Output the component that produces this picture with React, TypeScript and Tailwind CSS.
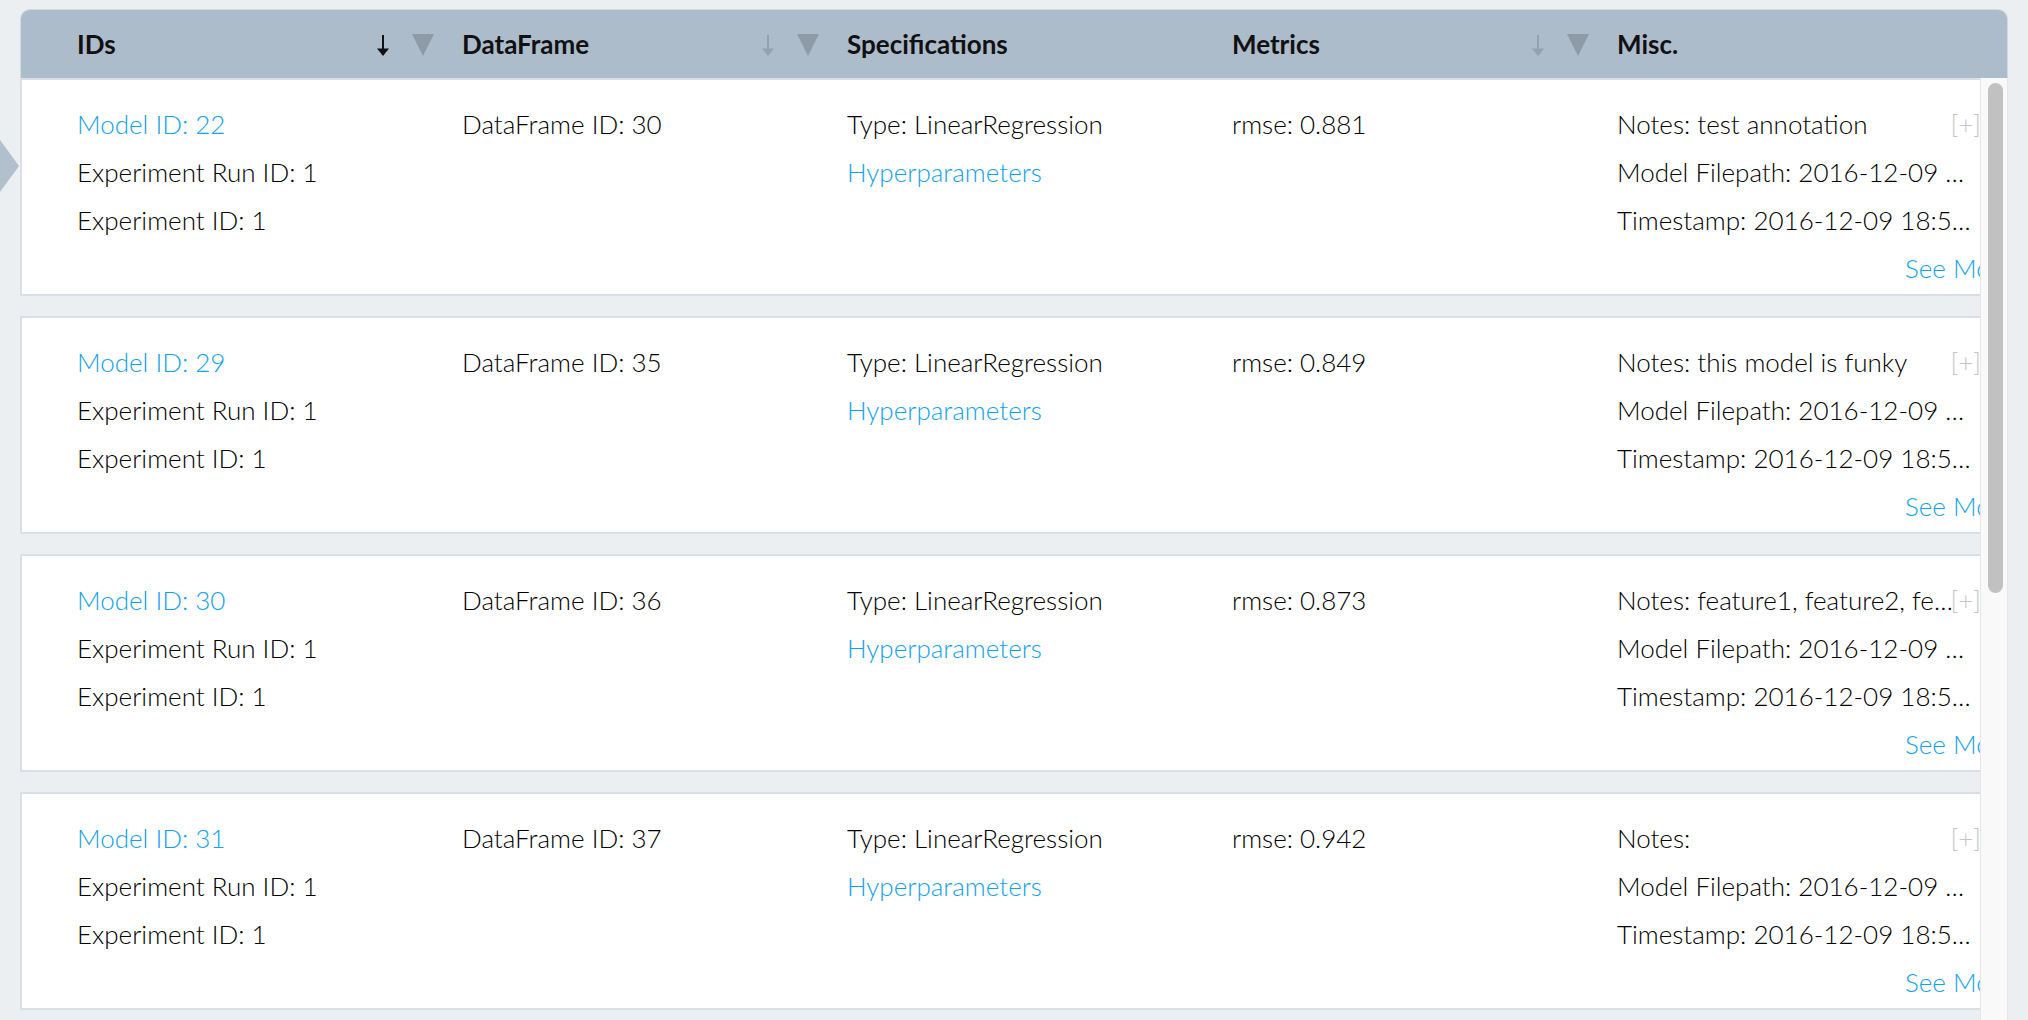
import React from 'react';

type Row = { id: number; df: number; rmse: string; notes: string };

const rows: Row[] = [
  { id: 22, df: 30, rmse: '0.881', notes: 'test annotation' },
  { id: 29, df: 35, rmse: '0.849', notes: 'this model is funky' },
  { id: 30, df: 36, rmse: '0.873', notes: 'feature1, feature2, feature3, feature4' },
  { id: 31, df: 37, rmse: '0.942', notes: '' },
  { id: 32, df: 38, rmse: '0.917', notes: '' },
];

function SortIcons({ active }: { active?: boolean }) {
  const c = active ? '#111111' : '#95a1ad';
  return (
    <div className="ml-auto flex items-center gap-[23px] pr-[28px] pt-[2px]">
      <svg width="12" height="21" viewBox="0 0 12 21">
        <rect x="5" y="0" width="2" height="15" fill={c} />
        <path d="M0 13.5 L12 13.5 L6 21 Z" fill={c} />
      </svg>
      <svg width="22" height="22" viewBox="0 0 22 22">
        <path d="M0 0 H22 L11 22 Z" fill="#8e9aa6" />
      </svg>
    </div>
  );
}

function HeaderCell({ label, sort, active }: { label: string; sort?: boolean; active?: boolean }) {
  return (
    <div className="flex h-full w-[385px] shrink-0 items-center">
      <span className="font-bold">{label}</span>
      {sort && <SortIcons active={active} />}
    </div>
  );
}

function Card({ r }: { r: Row }) {
  return (
    <div className="mb-[20px] flex overflow-hidden border-2 border-r-0 border-[#d8dfe6] bg-white pb-[2px] pl-[55px] pt-[20px] font-light text-black">
      <div className="w-[385px] shrink-0">
        <div className="text-[#0fa2f0]">Model ID: {r.id}</div>
        <div>Experiment Run ID: 1</div>
        <div>Experiment ID: 1</div>
      </div>
      <div className="w-[385px] shrink-0">
        <div>DataFrame ID: {r.df}</div>
      </div>
      <div className="w-[385px] shrink-0">
        <div>Type: LinearRegression</div>
        <div className="text-[#0fa2f0]">Hyperparameters</div>
      </div>
      <div className="w-[385px] shrink-0">
        <div>rmse: {r.rmse}</div>
      </div>
      <div className="w-[400px] shrink-0">
        <div className="flex w-[364px]">
          <span className="min-w-0 flex-1 truncate">Notes: {r.notes}</span>
          <span className="-ml-[6px] shrink-0 text-[#c4c4c4]">[+]</span>
        </div>
        <div className="w-[348px] truncate">Model Filepath: 2016-12-09 18:53:07_model_{r.id}.pkl</div>
        <div className="w-[357px] truncate">Timestamp: 2016-12-09 18:53:07</div>
        <div className="whitespace-nowrap pl-[288px] text-[#0fa2f0]">See More</div>
      </div>
    </div>
  );
}

export default function App() {
  return (
    <div className="relative flex h-screen w-full flex-col overflow-hidden bg-[#ebeff1] px-[20px] pt-[9px] font-[Lato,sans-serif] text-[26px] leading-[48px] text-[#111111]">
      {/* selected row marker */}
      <svg className="absolute left-0 top-[140px]" width="20" height="52" viewBox="0 0 20 52">
        <path d="M0 0 L19 26 L0 52 Z" fill="#b2c0cd" />
      </svg>

      <div className="flex h-[69px] shrink-0 rounded-t-[10px] border border-b-0 border-[#d3dbe2] bg-[#adbccb] pl-[56px]">
        <HeaderCell label="IDs" sort active />
        <HeaderCell label="DataFrame" sort />
        <HeaderCell label="Specifications" />
        <HeaderCell label="Metrics" sort />
        <HeaderCell label="Misc." />
      </div>

      <div className="flex min-h-0 flex-1">
        <div className="min-w-0 flex-1 overflow-hidden">
          {rows.map((r) => (
            <Card key={r.id} r={r} />
          ))}
        </div>
        {/* scrollbar */}
        <div className="w-[28px] shrink-0 border-x border-[#e6e6e6] bg-[#f9f9f9] pl-[7px] pt-[5px]">
          <div className="h-[510px] w-[15px] rounded-full bg-[#c1c1c1]" />
        </div>
      </div>
    </div>
  );
}
